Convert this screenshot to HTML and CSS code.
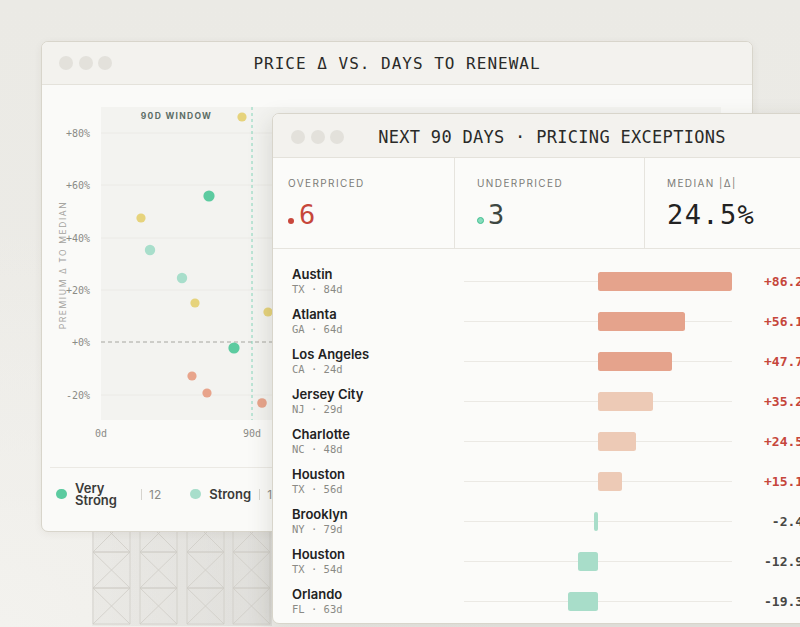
FILE: index.html
```html
<!DOCTYPE html>
<html>
  <head>
    <title>Pricing Exceptions</title>
    <link rel="stylesheet" href="styles.css">
  </head>
  <body>
    <div class="desk">

      <svg class="wireframe" width="180" height="112" viewBox="92 514 180 112">
        <g class="wf-box">
          <path d="M93 515h37v37h-37zM93 515l37 37M130 515l-37 37M93 552h37v36h-37zM93 552l37 36M130 552l-37 36M93 588h37v36h-37zM93 588l37 36M130 588l-37 36"/>
          <path d="M140 515h37v37h-37zM140 515l37 37M177 515l-37 37M140 552h37v36h-37zM140 552l37 36M177 552l-37 36M140 588h37v36h-37zM140 588l37 36M177 588l-37 36"/>
          <path d="M187 515h37v37h-37zM187 515l37 37M224 515l-37 37M187 552h37v36h-37zM187 552l37 36M224 552l-37 36M187 588h37v36h-37zM187 588l37 36M224 588l-37 36"/>
          <path d="M233 515h37v37h-37zM233 515l37 37M270 515l-37 37M233 552h37v36h-37zM233 552l37 36M270 552l-37 36M233 588h37v36h-37zM233 588l37 36M270 588l-37 36"/>
        </g>
      </svg>

      <!-- back window: scatter -->
      <div class="window back-window">
        <div class="titlebar">
          <div class="lights"><span></span><span></span><span></span></div>
          <h2 class="title">PRICE Δ VS. DAYS TO RENEWAL</h2>
        </div>

        <svg class="scatter" width="710" height="382" viewBox="42 85 710 382">
          <rect class="plot-bg" x="101" y="107" width="620" height="313"/>
          <g class="grid">
            <line x1="101" x2="721" y1="133" y2="133"/>
            <line x1="101" x2="721" y1="185" y2="185"/>
            <line x1="101" x2="721" y1="238" y2="238"/>
            <line x1="101" x2="721" y1="290" y2="290"/>
            <line x1="101" x2="721" y1="395" y2="395"/>
          </g>
          <line class="zero" x1="101" x2="721" y1="342" y2="342"/>
          <line class="window-edge" x1="252" x2="252" y1="107" y2="420"/>

          <g class="y-labels">
            <text x="90" y="136.5">+80%</text>
            <text x="90" y="188.5">+60%</text>
            <text x="90" y="241.5">+40%</text>
            <text x="90" y="293.5">+20%</text>
            <text x="90" y="345.5">+0%</text>
            <text x="90" y="398.5">-20%</text>
          </g>
          <g class="x-labels">
            <text x="101" y="437">0d</text>
            <text x="252" y="437">90d</text>
          </g>
          <text class="window-label" x="176.5" y="118.5">90D WINDOW</text>
          <text class="axis-title" x="63" y="268" transform="rotate(-90 63 265)">PREMIUM Δ TO MEDIAN</text>

          <g class="dots">
            <circle class="d-yellow" cx="242" cy="117" r="4.6"/>
            <circle class="d-strong" cx="209" cy="196" r="5.6"/>
            <circle class="d-yellow" cx="141" cy="218" r="4.6"/>
            <circle class="d-soft" cx="150" cy="250" r="5.2"/>
            <circle class="d-soft" cx="182" cy="278" r="5.2"/>
            <circle class="d-yellow" cx="195" cy="303" r="4.6"/>
            <circle class="d-yellow" cx="268" cy="312" r="4.6"/>
            <circle class="d-strong" cx="234" cy="348" r="5.6"/>
            <circle class="d-salmon" cx="192" cy="376" r="4.6"/>
            <circle class="d-salmon" cx="207" cy="393" r="4.6"/>
            <circle class="d-salmon" cx="262" cy="403" r="4.8"/>
          </g>
        </svg>

        <div class="legend">
          <div class="legend-item">
            <span class="swatch strong"></span>
            <span class="legend-label wide">Very Strong</span>
            <span class="legend-sep"></span>
            <span class="legend-count">12</span>
          </div>
          <div class="legend-item">
            <span class="swatch soft"></span>
            <span class="legend-label">Strong</span>
            <span class="legend-sep"></span>
            <span class="legend-count">18</span>
          </div>
        </div>
      </div>

      <!-- front window: exceptions -->
      <div class="window front-window">
        <div class="titlebar">
          <div class="lights"><span></span><span></span><span></span></div>
          <h2 class="title">NEXT 90 DAYS · PRICING EXCEPTIONS</h2>
        </div>

        <div class="stats">
          <div class="stat first">
            <div class="stat-label">OVERPRICED</div>
            <div class="stat-value over"><span class="mark red"></span>6</div>
          </div>
          <div class="stat">
            <div class="stat-label">UNDERPRICED</div>
            <div class="stat-value under"><span class="mark teal"></span>3</div>
          </div>
          <div class="stat">
            <div class="stat-label">MEDIAN |Δ|</div>
            <div class="stat-value">24.5%</div>
          </div>
        </div>

        <div class="rows">
          <div class="row">
            <div class="city"><div class="name">Austin</div><div class="meta">TX · 84d</div></div>
            <div class="track"><div class="neg"></div><div class="pos"><div class="bar hot" style="width:134px"></div></div></div>
            <div class="value up">+86.2%</div>
          </div>
          <div class="row">
            <div class="city"><div class="name">Atlanta</div><div class="meta">GA · 64d</div></div>
            <div class="track"><div class="neg"></div><div class="pos"><div class="bar hot" style="width:87.2px"></div></div></div>
            <div class="value up">+56.1%</div>
          </div>
          <div class="row">
            <div class="city"><div class="name">Los Angeles</div><div class="meta">CA · 24d</div></div>
            <div class="track"><div class="neg"></div><div class="pos"><div class="bar hot" style="width:74.2px"></div></div></div>
            <div class="value up">+47.7%</div>
          </div>
          <div class="row">
            <div class="city"><div class="name">Jersey City</div><div class="meta">NJ · 29d</div></div>
            <div class="track"><div class="neg"></div><div class="pos"><div class="bar warm" style="width:54.7px"></div></div></div>
            <div class="value up">+35.2%</div>
          </div>
          <div class="row">
            <div class="city"><div class="name">Charlotte</div><div class="meta">NC · 48d</div></div>
            <div class="track"><div class="neg"></div><div class="pos"><div class="bar warm" style="width:38.1px"></div></div></div>
            <div class="value up">+24.5%</div>
          </div>
          <div class="row">
            <div class="city"><div class="name">Houston</div><div class="meta">TX · 56d</div></div>
            <div class="track"><div class="neg"></div><div class="pos"><div class="bar warm" style="width:23.5px"></div></div></div>
            <div class="value up">+15.1%</div>
          </div>
          <div class="row">
            <div class="city"><div class="name">Brooklyn</div><div class="meta">NY · 79d</div></div>
            <div class="track"><div class="neg"><div class="bar cool" style="width:3.7px"></div></div><div class="pos"></div></div>
            <div class="value">-2.4%</div>
          </div>
          <div class="row">
            <div class="city"><div class="name">Houston</div><div class="meta">TX · 54d</div></div>
            <div class="track"><div class="neg"><div class="bar cool" style="width:20.1px"></div></div><div class="pos"></div></div>
            <div class="value">-12.9%</div>
          </div>
          <div class="row">
            <div class="city"><div class="name">Orlando</div><div class="meta">FL · 63d</div></div>
            <div class="track"><div class="neg"><div class="bar cool" style="width:30px"></div></div><div class="pos"></div></div>
            <div class="value">-19.3%</div>
          </div>
        </div>
      </div>

    </div>
  </body>
</html>
```

FILE: styles.css
```css
body {
  margin: 0;
  background: #ecebe6;
  font-family: Inter, 'Noto Sans', sans-serif;
  color: #222;
}
.desk {
  position: relative;
  width: 800px;
  height: 627px;
  overflow: hidden;
  background:
    radial-gradient(ellipse at 0% 100%, #f3f2ee 0%, rgba(243, 242, 238, 0) 45%),
    linear-gradient(180deg, #ebeae5 0%, #edece8 100%);
}

/* wireframe decoration under the back window */
.wireframe {
  position: absolute;
  left: 92px;
  top: 514px;
  background: linear-gradient(90deg, rgba(0, 0, 0, 0.03), rgba(0, 0, 0, 0.07));
}
.wf-box path {
  fill: none;
  stroke: #cfcdc6;
  stroke-width: 0.8;
}

/* windows */
.window {
  position: absolute;
  box-sizing: border-box;
  border: 1px solid #d8d5cb;
  border-radius: 7px;
  overflow: hidden;
}
.back-window {
  left: 41px;
  top: 41px;
  width: 712px;
  height: 491px;
  background: #fafaf8;
  box-shadow: 0 2px 8px rgba(60, 55, 40, 0.06);
}
.front-window {
  left: 272px;
  top: 113px;
  width: 560px;
  height: 511px;
  background: #fbfbf9;
  box-shadow: -4px 6px 22px rgba(60, 55, 40, 0.12);
}
.titlebar {
  display: grid;
  grid-template-columns: 1fr auto 1fr;
  align-items: center;
  height: 43px;
  box-sizing: border-box;
  padding: 0 17px;
  background: #f3f2ee;
  border-bottom: 1px solid #e4e2db;
}
.lights {
  display: flex;
  gap: 5.5px;
}
.lights span {
  width: 14px;
  height: 14px;
  border-radius: 50%;
  background: #e3e1db;
}
.title {
  margin: 0;
  font-family: 'DejaVu Sans Mono', monospace;
  font-weight: normal;
  font-size: 16px;
  letter-spacing: 1px;
  color: #2a2a28;
}
.front-window .titlebar {
  padding: 0 18px;
  height: 44px;
}
.front-window .lights {
  gap: 5.5px;
  margin-top: 2px;
}
.front-window .title {
  font-size: 17px;
  letter-spacing: 0.3px;
  margin-top: 2px;
}

/* scatter */
.scatter {
  display: block;
}
.plot-bg {
  fill: #f3f3f0;
}
.grid line {
  stroke: #ebeae6;
  stroke-width: 1;
}
.zero {
  stroke: #a6a6a0;
  stroke-dasharray: 4 3;
}
.window-edge {
  stroke: #86d6bb;
  stroke-dasharray: 3 3;
}
.y-labels text,
.x-labels text {
  font-family: 'DejaVu Sans Mono', monospace;
  font-size: 10px;
  fill: #8b8b86;
}
.y-labels text {
  text-anchor: end;
}
.x-labels text {
  text-anchor: middle;
}
.window-label {
  font-family: Inter, sans-serif;
  font-size: 8.5px;
  font-weight: 700;
  letter-spacing: 1.3px;
  fill: #5c6d66;
  text-anchor: middle;
}
.axis-title {
  font-family: Inter, sans-serif;
  font-size: 8.5px;
  letter-spacing: 1.6px;
  fill: #a4a39e;
  text-anchor: middle;
}
.d-yellow { fill: #e6d37c; }
.d-strong { fill: #5ccba0; }
.d-soft { fill: #a8decb; }
.d-salmon { fill: #e8a48b; }

/* legend */
.legend {
  display: flex;
  align-items: center;
  gap: 29px;
  margin: 0 8px;
  padding: 13.5px 0 0 6px;
  border-top: 1px solid #ebe9e4;
}
.legend-item {
  display: flex;
  align-items: center;
}
.swatch {
  width: 10.5px;
  height: 10.5px;
  border-radius: 50%;
  margin-right: 8.5px;
}
.swatch.strong { background: #5ccba0; }
.swatch.soft { background: #a8decb; }
.legend-label {
  font-size: 13px;
  font-weight: 600;
  line-height: 12.5px;
  color: #3a3a38;
}
.legend-label.wide {
  width: 58px;
}
.legend-sep {
  width: 1px;
  height: 11px;
  margin: 0 7px 0 8px;
  background: #d6d4ce;
}
.legend-count {
  font-size: 12px;
  color: #8a8a86;
}

/* stats */
.stats {
  display: grid;
  grid-template-columns: 182px 190px 1fr;
  height: 91px;
  box-sizing: border-box;
  border-bottom: 1px solid #e6e4de;
}
.stat {
  padding: 18.5px 0 0 22px;
  border-right: 1px solid #e6e4de;
}
.stat.first {
  padding-left: 15px;
}
.stat-label {
  font-size: 10px;
  line-height: 12px;
  letter-spacing: 1.4px;
  color: #7b7b77;
  margin-bottom: 10.5px;
}
.stat-value {
  font-family: 'DejaVu Sans Mono', monospace;
  font-size: 27px;
  line-height: 32px;
  letter-spacing: 1.4px;
  color: #222;
}
.stat-value.over { color: #c6463b; }
.stat-value.under { color: #3d4742; }
.mark {
  display: inline-block;
  width: 6px;
  height: 6px;
  border-radius: 50%;
  margin-right: 5px;
  vertical-align: 0;
}
.mark.red { background: #c9473c; }
.mark.teal {
  width: 5px;
  height: 5px;
  background: #86dcbc;
  border: 1px solid #3fbf8f;
  margin-right: 4px;
}

/* rows */
.rows {
  padding: 12px 0 0 19px;
}
.row {
  display: grid;
  grid-template-columns: 172px 268px 79px;
  align-items: center;
  height: 40px;
}
.name {
  font-size: 13px;
  font-weight: 600;
  line-height: 16px;
  color: #222;
}
.meta {
  font-family: 'DejaVu Sans Mono', monospace;
  font-size: 10.5px;
  line-height: 14px;
  color: #8a8a85;
}
.track {
  display: grid;
  grid-template-columns: 1fr 1fr;
  height: 19px;
  background: linear-gradient(#ebe9e4, #ebe9e4) center / 100% 1px no-repeat;
}
.neg {
  display: flex;
  justify-content: flex-end;
}
.pos {
  display: flex;
}
.bar {
  height: 19px;
  border-radius: 2.5px;
}
.bar.hot { background: #e5a38c; }
.bar.warm { background: #edcab6; }
.bar.cool { background: #a8ddc9; }
.value {
  text-align: right;
  font-family: 'DejaVu Sans Mono', monospace;
  font-size: 13px;
  font-weight: bold;
  color: #474745;
}
.value.up { color: #c6463b; }
```
